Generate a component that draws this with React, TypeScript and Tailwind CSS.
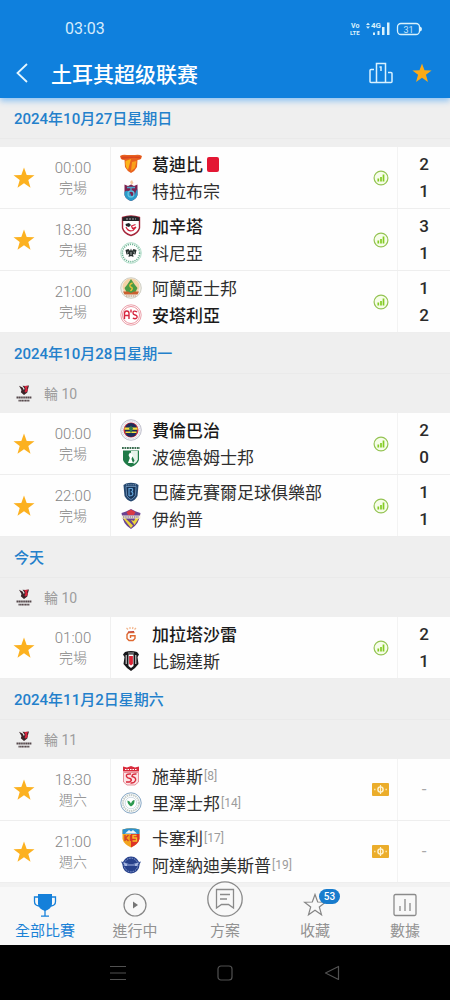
import type { ReactNode } from 'react'

interface Team {
  name: string
  crest: string
  score?: number
  winner?: boolean
  redCard?: boolean
  rank?: number
}

interface Match {
  time: string
  status: string
  starred: boolean
  teams: [Team, Team]
}

interface Day {
  date: string
  round?: string
  matches: Match[]
}

const DAYS: Day[] = [
  {
    date: '2024年10月27日星期日',
    matches: [
      { time: '00:00', status: '完場', starred: true, teams: [
        { name: '葛迪比', crest: 'goztepe', score: 2, winner: true, redCard: true },
        { name: '特拉布宗', crest: 'trabzon', score: 1 },
      ] },
      { time: '18:30', status: '完場', starred: true, teams: [
        { name: '加辛塔', crest: 'gaziantep', score: 3, winner: true },
        { name: '科尼亞', crest: 'konya', score: 1 },
      ] },
      { time: '21:00', status: '完場', starred: false, teams: [
        { name: '阿蘭亞士邦', crest: 'alanya', score: 1 },
        { name: '安塔利亞', crest: 'antalya', score: 2, winner: true },
      ] },
    ],
  },
  {
    date: '2024年10月28日星期一',
    round: '輪 10',
    matches: [
      { time: '00:00', status: '完場', starred: true, teams: [
        { name: '費倫巴治', crest: 'fener', score: 2, winner: true },
        { name: '波德魯姆士邦', crest: 'bodrum', score: 0 },
      ] },
      { time: '22:00', status: '完場', starred: true, teams: [
        { name: '巴薩克賽爾足球俱樂部', crest: 'basaksehir', score: 1 },
        { name: '伊約普', crest: 'eyup', score: 1 },
      ] },
    ],
  },
  {
    date: '今天',
    round: '輪 10',
    matches: [
      { time: '01:00', status: '完場', starred: true, teams: [
        { name: '加拉塔沙雷', crest: 'galatasaray', score: 2, winner: true },
        { name: '比錫達斯', crest: 'besiktas', score: 1 },
      ] },
    ],
  },
  {
    date: '2024年11月2日星期六',
    round: '輪 11',
    matches: [
      { time: '18:30', status: '週六', starred: true, teams: [
        { name: '施華斯', crest: 'sivas', rank: 8 },
        { name: '里澤士邦', crest: 'rize', rank: 14 },
      ] },
      { time: '21:00', status: '週六', starred: true, teams: [
        { name: '卡塞利', crest: 'kayseri', rank: 17 },
        { name: '阿達納迪美斯普', crest: 'adana', rank: 19 },
      ] },
    ],
  },
]

// Every crest is drawn on a 22x22 box
const CRESTS: Record<string, ReactNode> = {
  goztepe: (
    <>
      <path d="M0 3 Q3 1 7 2 L15 2 Q19 1 22 3 L21 6 Q19 7 17.5 7 L17 14 Q15 18 11 20 Q7 18 5 14 L4.5 7 Q2 7 1 6Z" fill="#e8621f" />
      <path d="M5.5 8 L11 6 L8 17 Q5.5 14 5.5 11Z" fill="#fbb41c" />
      <path d="M12 9 L16.5 8 L15 15 L11 18Z" fill="#f9a01b" />
      <path d="M1 3.5 L21 3.5 L20 5.5 L14 4.8 L2 6Z" fill="#d9451d" />
    </>
  ),
  trabzon: (
    <>
      <path d="M10 2 L12 0 L13.5 3 L11.5 5Z" fill="#f5c9a0" />
      <path d="M4.5 4.5 L8 6 L11 4.5 L14 6 L17.5 4.5 V15 Q16.5 19 11 21 Q5.5 19 4.5 15Z" fill="#7b2350" />
      <path d="M4.5 12 Q8 9 10 13 L12 17 Q15 16 16 11 L17.5 9 V15 Q16.5 19 11 21 Q5.5 19 4.5 15Z" fill="#2b9bc9" />
      <circle cx="11" cy="14" r="3" fill="none" stroke="#64c3e0" strokeWidth="1.3" />
      <path d="M7 7.5 H15 M11 7 V12" stroke="#4aa6cc" strokeWidth="1.3" />
    </>
  ),
  gaziantep: (
    <>
      <path d="M2.5 2.5 Q11 -.5 19.5 2.5 V13 Q18 18.5 11 20.5 Q4 18.5 2.5 13Z" fill="#fff" stroke="#a5253a" strokeWidth="1.4" />
      <path d="M2.5 2.5 Q11 -.5 19.5 2.5 V6 H2.5Z" fill="#242428" />
      <path d="M6 4 H16" stroke="#a9a9ad" strokeWidth="1.2" strokeDasharray="2 1" />
      <path d="M5.5 9 L9 8 L11 10 L9 12 L6 11Z" fill="#242428" />
      <path d="M6 12 Q8 17 13 15.5 L16 12 L12.5 13.5 L11.5 11 L15.5 9.5" fill="none" stroke="#d3203b" strokeWidth="1.2" />
    </>
  ),
  konya: (
    <>
      <circle cx="11" cy="11" r="10.3" fill="#fff" stroke="#7fc9a8" strokeWidth=".6" />
      <circle cx="11" cy="11" r="8.7" fill="none" stroke="#6fb596" strokeWidth="1.6" strokeDasharray="1.2 1" />
      <path d="M5.5 8 L8.5 7 L10 9 L11 6.5 L12 9 L13.5 7 L16.5 8 L15.5 12.5 L13 12 L13.5 15 L11 14 L8.5 15 L9 12 L6.5 12.5Z" fill="#26302e" />
      <path d="M8 9.5 L7.5 11.5 M14 9.5 L14.5 11.5 M11 10 V13" stroke="#fff" strokeWidth=".6" />
    </>
  ),
  alanya: (
    <>
      <circle cx="11" cy="11" r="10.3" fill="#f2eee6" stroke="#c4c4b8" strokeWidth=".8" />
      <path d="M2.5 10 A8.500 8.500 0 0 1 19.500 10 L18 15 H4Z" fill="#f5d3a8" />
      <path d="M11 2 L15 8 L17.5 11 L15 16 H7 L4.5 11 L7 8Z" fill="#4b9b45" />
      <path d="M12.5 6 Q8.5 7.5 10.5 10 Q14 11 10.5 14" fill="none" stroke="#e9c13a" strokeWidth="1.4" />
      <path d="M3 14.5 H8 L11 16 L14 14.500 H19 L17.5 17.5 H4.5Z" fill="#c9602e" />
      <path d="M6 19 H16" stroke="#b88c74" strokeWidth="1.2" strokeDasharray="1.5 .8" />
    </>
  ),
  antalya: (
    <>
      <circle cx="11" cy="11" r="10.2" fill="#fff" stroke="#eb9fa9" strokeWidth="1" />
      <circle cx="11" cy="11" r="8.5" fill="none" stroke="#e67785" strokeWidth=".8" />
      <path d="M4.5 15 V9.5 Q4.5 7 6.8 7 Q9 7 9 9.5 V15 M4.5 11.5 H9 M11 5.5 V8.5 M17.2 8 Q13 5.800 13 9 Q13 10.500 15.200 11 Q17.500 11.500 17 13.500 Q16 15.500 12.800 14.200" fill="none" stroke="#d6263f" strokeWidth="1.4" />
    </>
  ),
  fener: (
    <>
      <circle cx="11" cy="11" r="10.3" fill="#f6f6f8" stroke="#b9b9c6" strokeWidth=".9" />
      <circle cx="11" cy="11" r="8.8" fill="none" stroke="#cfcfda" strokeWidth="1" strokeDasharray="1.2 1" />
      <circle cx="11" cy="11" r="7.5" fill="#c92b3c" />
      <path d="M5 10 A6 6 0 0 1 17 10 V12 A6 6 0 0 1 5 12Z" fill="#1c2c5b" />
      <path d="M4.500 8.5 H17.500 V10.800 H4.500Z M5.500 12.500 H16.500 V14 H5.500Z" fill="#f5df3c" />
      <path d="M11 6.500 L13 9.500 L11 14.500 L9 9.500Z" fill="#2f7a4b" />
    </>
  ),
  bodrum: (
    <>
      <path d="M2 2 H20" stroke="#3c6f51" strokeWidth="1.8" strokeDasharray="1.8 .7" />
      <path d="M3 4.5 H19 V14 Q17.5 18.5 11 21 Q4.5 18.5 3 14Z" fill="#1f7a47" />
      <path d="M11 5 H17.8 V13.5 Q17 16.5 14 18 L11 14Z" fill="#e7f3ea" />
      <path d="M10 6.5 L13 9 L12.3 12 L14.5 17 H8 L9.8 12 L8.5 9Z" fill="#fff" />
      <path d="M12.5 10.5 L14.5 14.5 L13 17 L11.5 13Z" fill="#1f7a47" />
    </>
  ),
  basaksehir: (
    <>
      <path d="M3.5 4 L6 2.5 Q11 .8 16 2.5 L18.5 4 L17.5 15 Q15 19.5 11 20.5 Q7 19.5 4.5 15Z" fill="#24476f" />
      <path d="M6 5.5 H16 L15.3 14.5 Q13.5 17.5 11 18.5 Q8.5 17.5 6.7 14.5Z" fill="#173357" stroke="#7ea3c8" strokeWidth=".7" />
      <path d="M9 15 V7.5 H12 Q13.5 9 11.5 10.8 Q14 12 12 14.5 L9 15" fill="none" stroke="#65a5da" strokeWidth="1.2" />
      <path d="M6 3.8 H16" stroke="#9ab4cd" strokeWidth=".8" strokeDasharray="1 .8" />
    </>
  ),
  eyup: (
    <>
      <path d="M1.5 5 L6 3.5 L11 1 L16 3.5 L20.5 5 Q19.5 16 11 21 Q2.5 16 1.5 5Z" fill="#6b4391" />
      <path d="M3 10 L9 17.5 L11 20 L13 17.5 L5 10Z M11 12 L14.5 17 L19 10 H15.5 L14 13Z" fill="#ecd63b" />
      <path d="M6.5 4 L11 1.5 L15.5 4 L14 7 H8Z" fill="#d93b45" />
      <path d="M1.5 7.5 H20.5 V10.5 H1.5Z" fill="#f5efda" />
      <path d="M3 9 H19" stroke="#655573" strokeWidth="1.2" strokeDasharray="1.5 .7" />
    </>
  ),
  galatasaray: (
    <>
      <path d="M6.5 5 L8 6.5 M10 4 V6 M13 4 L12.5 6 M16 5 L14.5 6.5" stroke="#f2b48a" strokeWidth="1.2" />
      <path d="M14.5 9.5 H8.5 L7 11.5 V15.5 L9 17.5 H13 L15 15.5 V12.8 H10.5 V15" fill="none" stroke="#df6930" strokeWidth="1.4" />
      <path d="M8 9 L14 8.5" stroke="#b9383b" strokeWidth="1" />
    </>
  ),
  besiktas: (
    <>
      <path d="M5 2 Q11 0 17 2 L19 4.5 L17.5 7 L18.5 14 L15 18 L11 21 L7 18 L3.5 14 L4.5 7 L3 4.5Z" fill="#17171a" />
      <path d="M6.2 5 V14 M15.8 5 V14" stroke="#fff" strokeWidth=".9" />
      <path d="M8.5 4.500 H13.5 V16 L11 18 L8.5 16Z" fill="#fff" />
      <path d="M9.1 6 H12.9 V14 L11 15.5 L9.1 14Z" fill="#dc2436" />
      <path d="M8 3 H14" stroke="#a8a8a8" strokeWidth="1" />
    </>
  ),
  sivas: (
    <>
      <path d="M3 1.5 L7 2.5 L11 1 L15 2.5 L19 1.5 V6.5 H3Z" fill="#d92a3b" />
      <path d="M5 4.5 H17" stroke="#fff" strokeWidth="1" strokeDasharray="1.5 1" />
      <path d="M3.5 7.5 H18.5 V17 L15 20 H7 L3.5 17Z" fill="#fbe3e5" stroke="#e06673" strokeWidth=".7" />
      <path d="M11 9 Q5.5 8.5 6.5 11.5 Q7 13 10 13.5 Q13 15 9.5 17 H6 M16.5 9 Q12 8.5 12 11.5 Q16.5 12.5 15.5 15.5 Q14 18.5 10.5 18" fill="none" stroke="#d92a3b" strokeWidth="1.4" />
    </>
  ),
  rize: (
    <>
      <circle cx="11" cy="11" r="10.2" fill="#fff" stroke="#85a6c4" strokeWidth="1" />
      <circle cx="11" cy="11" r="8" fill="none" stroke="#c4cdc9" strokeWidth="2" strokeDasharray="1.5 .7" />
      <circle cx="11" cy="11" r="5.8" fill="#fff" stroke="#bccdd9" strokeWidth=".7" />
      <path d="M11 14.5 Q7 12 7.5 8.5 Q10 9 11 11.5 Q12 8 14.5 8 Q15 12.5 11 14.5Z" fill="#2d9a50" />
    </>
  ),
  kayseri: (
    <>
      <path d="M2.5 2.5 Q11 0 19.5 2.5 V12 Q18 17.5 11 20.5 Q4 17.5 2.5 12Z" fill="#f3a51f" />
      <path d="M2.5 2.5 Q11 0 19.5 2.5 V7 H2.5Z" fill="#2d91cd" />
      <path d="M5 6.5 L9 3 L11 4.5 L13 3 L17 6.5Z" fill="#eef5fa" />
      <path d="M11 7 H19.5 V12 Q18 17.5 11 20.5Z" fill="#dc3328" />
      <path d="M5 8 V14 M8.5 8 L5.5 11 L8.5 14 M10.5 8 V14" fill="none" stroke="#d2432a" strokeWidth="1.4" />
      <path d="M16.5 8.5 H13 V11 H16.5 V14 H12.5" fill="none" stroke="#f8bf2a" strokeWidth="1.4" />
    </>
  ),
  adana: (
    <>
      <path d="M1 7.5 L5 8.5 L4.5 12 L2.5 10.5Z M21 7.5 L17 8.5 L17.5 12 L19.5 10.5Z" fill="#3b5597" />
      <circle cx="11" cy="11" r="8.5" fill="#27418b" />
      <circle cx="11" cy="11" r="6.8" fill="none" stroke="#8fa3d6" strokeWidth="1" strokeDasharray="1.5 1" />
      <path d="M3 8.5 L9 10 H13 L19 8.5 L17 12 H5Z" fill="#a9b9e2" />
      <path d="M7 11 H15 M9 14.5 H13" stroke="#27418b" strokeWidth="1.2" />
    </>
  ),
}

const STAR_PATH = 'M12 1.5 L14.7 9 L22.5 9.2 L16.3 14 L18.5 21.7 L12 17.2 L5.5 21.7 L7.7 14 L1.5 9.2 L9.3 9Z'

function Star({ className }: { className: string }) {
  return (
    <svg viewBox="0 0 24 24" className={className} fill="currentColor" aria-hidden="true">
      <path d={STAR_PATH} />
    </svg>
  )
}

function LeagueLogo() {
  return (
    <svg viewBox="0 0 16 18" className="w-4 h-[18px]" aria-hidden="true">
      <path d="M3 .8 L6.5 2.500 L8 5.2 L8.5 3.5 L6.5 .8 L9.5 1 L13 .5 L12 4 L11.3 7.5 L8 10 L4.8 7.2 L5.5 5Z" fill="#3a2429" />
      <path d="M8.2 1 L12.2 .8 L11 3 L12 5 L10 7.800 L8.5 6.5 L9.5 4Z" fill="#d8253e" />
      <path d="M.5 12.5 H15.5" stroke="#56494c" strokeWidth="2" strokeDasharray="1.6 .3" />
      <path d="M2.5 15.7 H13.5" stroke="#56494c" strokeWidth="1.8" strokeDasharray="1.3 .3" />
    </svg>
  )
}

function StatsIcon() {
  return (
    <svg viewBox="0 0 16 16" className="size-4" aria-hidden="true">
      <circle cx="8" cy="8" r="6.9" fill="#f6fde9" stroke="#94c353" strokeWidth="1.2" />
      <path d="M5.3 8.5 V11.5 M8 7 V11.5 M10.5 4.5 V11.5" stroke="#83cc24" strokeWidth="1.7" />
    </svg>
  )
}

function OddsIcon() {
  return (
    <svg viewBox="0 0 17 13" className="w-[17px] h-[13px]" aria-hidden="true">
      <rect width="17" height="13" rx="1" fill="#ebad2b" />
      <circle cx="8.5" cy="6.5" r="2.6" fill="none" stroke="#fff3d0" strokeWidth="1.4" />
      <path d="M8.5 2 V11" stroke="#fff3d0" strokeWidth="1.2" />
      <path d="M2 6.5 H3.6 M13.4 6.5 H15" stroke="#fbe2a4" strokeWidth="1.6" />
    </svg>
  )
}

function StatusBar() {
  return (
    <div className="flex h-12 items-center justify-between pt-2.5 pl-[65px] pr-7 text-base text-[#d5ecfc]">
      <span>03:03</span>
      <svg viewBox="0 0 72 16" className="h-4 w-[72px]" fill="none" stroke="#d9f1fc" aria-hidden="true">
        <g fill="#d9f1fc" stroke="none" fontFamily="Roboto, sans-serif" fontWeight="700">
          <text x="1" y="7" fontSize="7">Vo</text>
          <text x="0" y="14" fontSize="6">LTE</text>
          <text x="21" y="7" fontSize="8">4G</text>
          <path d="M16 4 L18 1.8 L20 4Z M16 5.5 L18 7.7 L20 5.5Z" />
          <path d="M23 11.5 H25 V14 H23Z M27.5 10 H29.5 V14 H27.5Z M32 6 H34.5 V14 H32Z M37 1.5 H39.5 V14 H37Z" />
          <path d="M70 5.5 Q72 6 72 8 Q72 10 70 10.5Z" />
        </g>
        <rect x="47.5" y="2.5" width="22" height="11" rx="3.5" strokeWidth="1.3" />
        <text x="53.5" y="11.5" fontSize="9" fill="#c5e3fa" stroke="none" fontFamily="Roboto, sans-serif">31</text>
      </svg>
    </div>
  )
}

function TeamRow({ team }: { team: Team }) {
  return (
    <div className="flex h-[27px] items-center">
      <svg viewBox="0 0 22 22" className="mr-2.5 size-[22px] shrink-0" aria-hidden="true">
        {CRESTS[team.crest]}
      </svg>
      <span className={team.winner ? 'pt-1 text-[17px] font-medium text-[#1b1b1b]' : 'pt-1 text-[17px] text-[#2f2f2f]'}>{team.name}</span>
      {team.redCard && <span className="ml-1 h-[15px] w-3 rounded-xs bg-[#e31733]" />}
      {team.rank && <span className="ml-px text-xs text-[#9c9c9c]">[{team.rank}]</span>}
    </div>
  )
}

function MatchRow({ match }: { match: Match }) {
  const played = match.teams[0].score !== undefined

  return (
    <li className="flex h-[62px] border-b border-[#eeeeee] bg-[#fefefe]">
      <div className="flex w-12 items-center justify-center">
        {match.starred && (
          <button type="button" aria-label="收藏">
            <Star className="size-6 text-[#fcb120]" />
          </button>
        )}
      </div>
      <div className="flex w-[50px] flex-col justify-center text-center text-sm leading-5 font-light text-[#858585]">
        <span className="text-[15px] leading-5">{match.time}</span>
        <span>{match.status}</span>
      </div>
      <div className="ml-3 flex min-w-0 flex-1 items-center border-l border-[#f0f0f0] pr-2 pl-[9px]">
        <div className="min-w-0 flex-1">
          {match.teams.map(team => <TeamRow key={team.crest} team={team} />)}
        </div>
        {played ? <StatsIcon /> : <OddsIcon />}
      </div>
      <div className="flex w-[53px] flex-col justify-center border-l border-[#f3f3f3] text-center text-[17px] leading-[27px] font-medium text-[#2b2b2b]">
        {played
          ? match.teams.map(team => <span key={team.crest}>{team.score}</span>)
          : <span className="font-normal text-[#a8a8a8]">-</span>}
      </div>
    </li>
  )
}

function DaySection({ day }: { day: Day }) {
  return (
    <section>
      <h2 className="flex h-[41px] items-center border-b border-[#eaeaea] px-3.5 pt-0.5 text-[15px] font-medium text-[#2380cb]">
        {day.date}
      </h2>
      {day.round ? (
        <div className="flex h-[39px] items-center gap-3 px-4 text-sm text-[#9d9d9d]">
          <LeagueLogo />
          <span>{day.round}</span>
        </div>
      ) : (
        <div className="h-2" />
      )}
      <ul>
        {day.matches.map(match => <MatchRow key={match.teams[0].crest} match={match} />)}
      </ul>
    </section>
  )
}

function NavItem({ label, active, children }: { label: string; active?: boolean; children: ReactNode }) {
  return (
    <a
      href="#"
      className={active
        ? 'flex flex-col items-center justify-end text-[15px] leading-5 text-[#1b82d6]'
        : 'flex flex-col items-center justify-end text-[15px] leading-5 text-[#929292]'}
    >
      {children}
      <span className="mt-1">{label}</span>
    </a>
  )
}

function BottomNav() {
  return (
    <nav className="relative grid h-[62px] grid-cols-5 grid-rows-[minmax(0,1fr)] border-t-4 border-[#f2f2f2] bg-[#f8f8f8] pb-1">
      <NavItem label="全部比賽" active>
        <svg viewBox="0 0 24 24" className="size-6 shrink-0" fill="none" stroke="#1580da" strokeWidth="1.3" aria-hidden="true">
          <path d="M5 1 H19 V11 Q18.5 16 12 18 Q5.5 16 5 11Z" fill="#1580da" stroke="none" />
          <path d="M5 4 H1.5 V8.5 Q1.5 12.5 6 13 M19 4 H22.5 V8.5 Q22.5 12.5 18 13 M12 17 V23 M8 23.2 H16" />
        </svg>
      </NavItem>
      <NavItem label="進行中">
        <svg viewBox="0 0 24 24" className="size-6 shrink-0" fill="none" stroke="#868686" strokeWidth="1.2" aria-hidden="true">
          <circle cx="12" cy="12" r="11" />
          <path d="M10 8.5 L15 12 L10 15.5Z" fill="#757575" stroke="none" />
        </svg>
      </NavItem>
      <NavItem label="方案">
        <svg viewBox="0 0 36 36" className="size-9 shrink-0" fill="none" stroke="#8a8a8a" strokeWidth="1.3" aria-hidden="true">
          <circle cx="18" cy="18" r="17.2" fill="#f8f8f8" />
          <path d="M9.5 8.5 H26.5 V27 L21.5 23.5 H14.5 L9.5 27Z M13 13.5 H23 M13 18 H20" />
        </svg>
      </NavItem>
      <NavItem label="收藏">
        <span className="relative">
          <svg viewBox="0 0 24 24" className="size-6" fill="none" stroke="#858585" strokeWidth="1.2" aria-hidden="true">
            <path d={STAR_PATH} />
          </svg>
          <span className="absolute -top-1 left-4 flex h-[15px] w-[21px] items-center justify-center rounded-full bg-[#187ccd] text-[10px] font-medium text-white">
            53
          </span>
        </span>
      </NavItem>
      <NavItem label="數據">
        <svg viewBox="0 0 24 24" className="size-6 shrink-0" fill="none" stroke="#8a8a8a" strokeWidth="1.3" aria-hidden="true">
          <rect x="1" y="1.5" width="22" height="21" rx="1.5" />
          <path d="M7 13 V18 M12 6 V18 M17 10 V18" />
        </svg>
      </NavItem>
    </nav>
  )
}

function SystemBar() {
  return (
    <div className="grid h-[55px] grid-cols-3 items-center justify-items-center bg-black px-16">
      <button type="button" aria-label="選單">
        <svg viewBox="0 0 16 16" className="size-4" fill="none" stroke="#515151" strokeWidth="1.2">
          <path d="M0 1.5 H16 M0 8 H16 M0 14.5 H16" />
        </svg>
      </button>
      <button type="button" aria-label="主畫面">
        <svg viewBox="0 0 16 16" className="size-4" fill="none" stroke="#515151" strokeWidth="1.2">
          <rect x="1" y="1" width="14" height="14" rx="3" />
        </svg>
      </button>
      <button type="button" aria-label="返回">
        <svg viewBox="0 0 16 16" className="size-4" fill="none" stroke="#515151" strokeWidth="1.2" strokeLinejoin="round">
          <path d="M14.5 1.5 V14.5 L1.5 8Z" />
        </svg>
      </button>
    </div>
  )
}

export default function App() {
  return (
    <div className="flex min-h-screen flex-col bg-[#efefef] font-[Roboto,'Noto_Sans_CJK_TC',sans-serif]">
      <header className="relative bg-[#0f80dd] text-white shadow-[0_3px_6px_#8fc3f2]">
        <StatusBar />
        <div className="flex h-[50px] items-center pr-[17px] pl-4">
          <button type="button" aria-label="返回">
            <svg viewBox="0 0 12 20" className="h-5 w-3" fill="none" stroke="#e4f6ff" strokeWidth="1.8">
              <path d="M11 1 L1.5 10 L11 19" />
            </svg>
          </button>
          <h1 lang="zh-Hans" className="ml-[23px] flex-1 font-['Noto_Sans_CJK_SC',sans-serif] text-[21px] leading-8 font-medium">土耳其超级联赛</h1>
          <button type="button" aria-label="排名" className="mr-[18px]">
            <svg viewBox="0 0 24 22" className="h-[22px] w-6" fill="none" stroke="#d9f1ff" strokeWidth="1.5">
              <path d="M7.5 20.5 V1.5 H16.5 V20.5 M5 7.500 H2 Q1 7.500 1 8.500 V19.500 Q1 20.500 2 20.500 H22 Q23 20.500 23 19.500 V11.500 Q23 10.500 22 10.500 H19 M10.5 5 H12 V9" />
            </svg>
          </button>
          <button type="button" aria-label="收藏聯賽">
            <Star className="size-[22px] text-[#fcaa17]" />
          </button>
        </div>
      </header>
      <main className="flex-1">
        {DAYS.map(day => <DaySection key={day.date} day={day} />)}
      </main>
      <BottomNav />
      <SystemBar />
    </div>
  )
}
